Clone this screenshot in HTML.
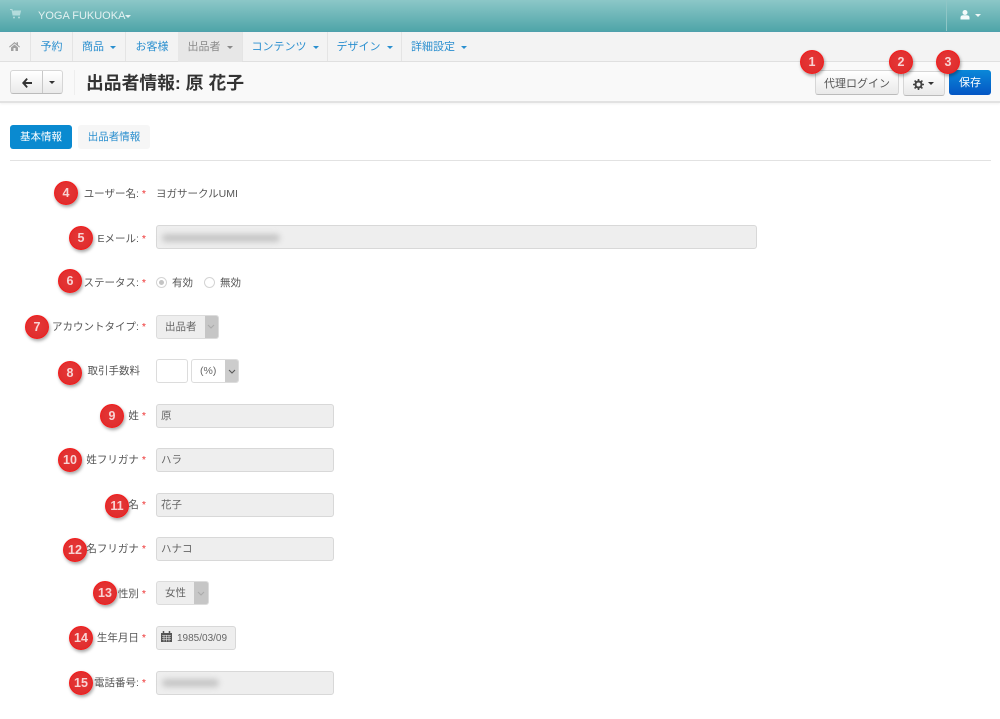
<!DOCTYPE html>
<html lang="ja"><head><meta charset="utf-8"><title>出品者情報</title>
<style>
html,body{margin:0;padding:0;background:#fff}
#p{position:relative;width:1000px;height:719px;overflow:hidden;background:#fff;font-family:"Liberation Sans","Noto Sans CJK JP",sans-serif;font-size:10.5px;color:#555;filter:blur(.35px)}
#p div,#p span.a,#p svg{position:absolute}
.t{white-space:nowrap;line-height:14px}
.nav{top:33px;height:29px;line-height:29px;color:#2a8fcf;font-size:11px;white-space:nowrap;text-align:center}
.sep{top:32px;width:1px;height:29px;background:#e4e4e4}
.c{display:inline-block;width:0;height:0;border-left:3px solid transparent;border-right:3px solid transparent;border-top:3px solid currentColor;vertical-align:middle;margin-left:3px}
.lb{right:854px;text-align:right;white-space:nowrap;line-height:14px;color:#555;font-size:10.5px}
.lb i{color:#e33;font-style:normal;margin-left:3px}
.in{left:156px;width:178px;height:24px;box-sizing:border-box;background:#eee;border:1px solid #d8d8d8;border-radius:3px;line-height:23px;padding-left:4px;color:#666;font-size:10.5px;white-space:nowrap}
.b{width:24px;height:24px;border-radius:50%;background:radial-gradient(circle at 50% 45%,#e63737,#dd2a2a);border:1px solid #f31c1c;box-sizing:border-box;box-shadow:1px 2px 3px rgba(0,0,0,.35);color:#f8d4d4;text-align:center;line-height:22px;font-size:12.5px;font-weight:bold;z-index:5}
.btn{box-sizing:border-box;border:1px solid #d6d6d6;border-bottom-color:#bbb;border-radius:3px;background:linear-gradient(#fff,#e9e9e9);text-align:center;color:#555}
.sel{box-sizing:border-box;background:#eee;border:1px solid #dcdcdc;border-radius:3px;height:24px;line-height:23px;color:#666}
.ar{top:0;right:0;bottom:0;background:#c6c6c6;border-radius:0 2px 2px 0}
.bl{filter:blur(3px);background:#c6c6c6;height:8px;border-radius:4px}
</style></head><body><div id="p">

<div style="left:0;top:0;width:1000px;height:32px;background:linear-gradient(#8cc7c7,#4fa5a8);border-bottom:1px solid #4fa0ad;box-sizing:border-box"></div>
<svg style="left:10px;top:9px" width="12" height="10" viewBox="0 0 12 10"><path d="M0 .5h2l1 5.500h6.500l1-4H3.500" fill="#b3dcdc" stroke="#b3dcdc"/><circle cx="4" cy="8.500" r="1" fill="#b3dcdc"/><circle cx="9" cy="8.500" r="1" fill="#b3dcdc"/></svg>
<div class="t" style="left:38px;top:9px;color:#e3f1f1;font-size:11px">YOGA FUKUOKA<span class="c" style="margin-left:0;border-width:3px 3.500px 0"></span></div>
<div style="left:946px;top:0;width:1px;height:31px;background:#8fc6c6"></div>
<svg style="left:960px;top:10px" width="11" height="10" viewBox="0 0 11 10"><circle cx="5" cy="2.500" r="2.500" fill="#f4fafa"/><path d="M.5 9.500V7.500Q.5 5.500 3 5.300h4Q9.500 5.500 9.500 7.500v2z" fill="#f4fafa"/></svg>
<div style="left:975px;top:14px;width:0;height:0;border-left:3px solid transparent;border-right:3px solid transparent;border-top:3px solid #eef7f7"></div>

<div style="left:0;top:32px;width:1000px;height:29px;background:#f3f3f3;border-bottom:1px solid #e0e0e0"></div>
<div style="left:178px;top:32px;width:64px;height:30px;background:#e7e7e7"></div>
<svg style="left:9px;top:41px" width="11" height="10" viewBox="0 0 11 10"><path d="M5.500 1L0 5.800l.7.700L5.500 2.500l4.800 4 .7-.7L9 4V1.200H7.500v1.500zM2 6.500V10h2.500V7h2v3H9V6.500L5.500 3.500z" fill="#a0a0a0"/></svg>
<div class="sep" style="left:30px"></div><div class="sep" style="left:72px"></div><div class="sep" style="left:125px"></div><div class="sep" style="left:242px"></div><div class="sep" style="left:327px"></div><div class="sep" style="left:401px"></div>
<div class="nav" style="left:31px;width:41px">予約</div>
<div class="nav" style="left:73px;width:52px">商品 <span class="c"></span></div>
<div class="nav" style="left:126px;width:52px">お客様</div>
<div class="nav" style="left:178px;width:64px;color:#8a8a8a">出品者 <span class="c"></span></div>
<div class="nav" style="left:243px;width:84px">コンテンツ <span class="c"></span></div>
<div class="nav" style="left:328px;width:73px">デザイン <span class="c"></span></div>
<div class="nav" style="left:402px;width:74px">詳細設定 <span class="c"></span></div>

<div style="left:0;top:62px;width:1000px;height:39px;background:#f9f9f9;border-bottom:2px solid #e2e2e2;box-shadow:0 1px 2px rgba(0,0,0,.06)"></div>
<div class="btn" style="left:10px;top:70px;width:53px;height:24px"></div>
<div style="left:42px;top:71px;width:1px;height:22px;background:#c8c8c8"></div>
<svg style="left:21px;top:78px" width="12" height="10" viewBox="0 0 12 10"><path d="M5.500 0L1 5l4.500 5 1.300-1.300L4.600 6H11V4H4.600l2.200-2.700z" fill="#333"/></svg>
<div style="left:49px;top:81px;width:0;height:0;border-left:3px solid transparent;border-right:3px solid transparent;border-top:3px solid #333"></div>
<div style="left:74px;top:70px;width:1px;height:25px;background:#eee"></div>
<div class="t" style="left:86px;top:72px;font-size:17.800px;line-height:22px;font-weight:bold;color:#333">出品者情報: 原 花子</div>

<div class="btn" style="left:815px;top:70px;width:84px;height:25px;line-height:26px;font-size:11px">代理ログイン</div>
<div class="btn" style="left:903px;top:71px;width:42px;height:25px"></div>
<svg style="left:913px;top:79px" width="11" height="11" viewBox="0 0 11 11"><circle cx="5.500" cy="5.500" r="3" fill="none" stroke="#444" stroke-width="2"/><path d="M5.500 0v2M5.500 9v2M0 5.500h2M9 5.500h2M1.600 1.600L3 3M8 8l1.400 1.400M9.400 1.600L8 3M3 8L1.600 9.400" stroke="#444" stroke-width="1.600"/></svg>
<div style="left:928px;top:82px;width:0;height:0;border-left:3px solid transparent;border-right:3px solid transparent;border-top:3px solid #333"></div>
<div style="left:949px;top:70px;width:42px;height:25px;border-radius:3px;background:linear-gradient(#0a88d8,#0456c4);color:#fff;text-align:center;line-height:26px;font-size:11px">保存</div>

<div style="left:10px;top:125px;width:62px;height:24px;border-radius:3px;background:#0a8ad0;color:#fff;text-align:center;line-height:25px;font-size:10.5px">基本情報</div>
<div style="left:78px;top:125px;width:72px;height:24px;border-radius:3px;background:#f6f6f6;color:#2a8fcf;text-align:center;line-height:25px;font-size:10.5px">出品者情報</div>
<div style="left:10px;top:160px;width:981px;height:1px;background:#e2e2e2"></div>

<div class="lb" style="top:187px">ユーザー名:<i>*</i></div>
<div class="t" style="left:156px;top:187px;font-size:10.5px">ヨガサークルUMI</div>

<div class="lb" style="top:232px">Eメール:<i>*</i></div>
<div class="in" style="top:225px;width:601px"></div>
<div class="bl" style="left:162px;top:234px;width:118px"></div>

<div class="lb" style="top:276px">ステータス:<i>*</i></div>
<div style="left:156px;top:277px;width:11px;height:11px;box-sizing:border-box;border-radius:50%;border:1px solid #d4d4d4;background:#fff"></div>
<div style="left:159px;top:280px;width:5px;height:5px;border-radius:50%;background:#c4c4c4"></div>
<div class="t" style="left:172px;top:276px">有効</div>
<div style="left:204px;top:277px;width:11px;height:11px;box-sizing:border-box;border-radius:50%;border:1px solid #d4d4d4;background:#fff"></div>
<div class="t" style="left:220px;top:276px">無効</div>

<div class="lb" style="top:320px">アカウントタイプ:<i>*</i></div>
<div class="sel" style="left:156px;top:315px;width:63px;padding-left:8px">出品者<div class="ar" style="width:13px"></div></div>
<svg style="left:207px;top:324px" width="8" height="5" viewBox="0 0 8 5"><path d="M1 1l3 3 3-3" fill="none" stroke="#aaa"/></svg>

<div class="lb" style="top:364px;right:860px">取引手数料</div>
<div style="left:156px;top:359px;width:32px;height:24px;box-sizing:border-box;border:1px solid #dcdcdc;border-radius:3px;background:#fff"></div>
<div class="sel" style="left:191px;top:359px;width:48px;background:#fff;padding-left:8px">(%)<div class="ar" style="width:13px;background:#ccc"></div></div>
<svg style="left:228px;top:369px" width="8" height="5" viewBox="0 0 8 5"><path d="M1 1l3 3 3-3" fill="none" stroke="#555"/></svg>

<div class="lb" style="top:409px">姓<i>*</i></div>
<div class="in" style="top:404px">原</div>
<div class="lb" style="top:453px">姓フリガナ<i>*</i></div>
<div class="in" style="top:448px">ハラ</div>
<div class="lb" style="top:498px">名<i>*</i></div>
<div class="in" style="top:493px">花子</div>
<div class="lb" style="top:542px">名フリガナ<i>*</i></div>
<div class="in" style="top:537px">ハナコ</div>

<div class="lb" style="top:587px">性別<i>*</i></div>
<div class="sel" style="left:156px;top:581px;width:53px;padding-left:8px">女性<div class="ar" style="width:14px"></div></div>
<svg style="left:197px;top:591px" width="8" height="5" viewBox="0 0 8 5"><path d="M1 1l3 3 3-3" fill="none" stroke="#aaa"/></svg>

<div class="lb" style="top:631px">生年月日<i>*</i></div>
<div class="in" style="top:626px;width:80px;padding-left:20px;font-size:10px">1985/03/09</div>
<svg style="left:161px;top:631px" width="11" height="11" viewBox="0 0 11 11"><path d="M0 2h11v9H0z" fill="#555"/><path d="M2.500 0v3M8.500 0v3" stroke="#555" stroke-width="1.500"/><path d="M1 4.500h9M1 6.500h9M1 8.500h9M3 4v6.500M5.500 4v6.500M8 4v6.500" stroke="#eee" stroke-width=".6"/></svg>

<div class="lb" style="top:676px">電話番号:<i>*</i></div>
<div class="in" style="top:671px"></div>
<div class="bl" style="left:162px;top:679px;width:57px"></div>

<div class="b" style="left:800px;top:50px">1</div>
<div class="b" style="left:889px;top:50px">2</div>
<div class="b" style="left:936px;top:50px">3</div>
<div class="b" style="left:54px;top:181px">4</div>
<div class="b" style="left:69px;top:226px">5</div>
<div class="b" style="left:58px;top:269px">6</div>
<div class="b" style="left:25px;top:315px">7</div>
<div class="b" style="left:58px;top:361px">8</div>
<div class="b" style="left:100px;top:404px">9</div>
<div class="b" style="left:58px;top:448px">10</div>
<div class="b" style="left:105px;top:494px">11</div>
<div class="b" style="left:63px;top:538px">12</div>
<div class="b" style="left:93px;top:581px">13</div>
<div class="b" style="left:69px;top:626px">14</div>
<div class="b" style="left:69px;top:671px">15</div>
</div></body></html>
